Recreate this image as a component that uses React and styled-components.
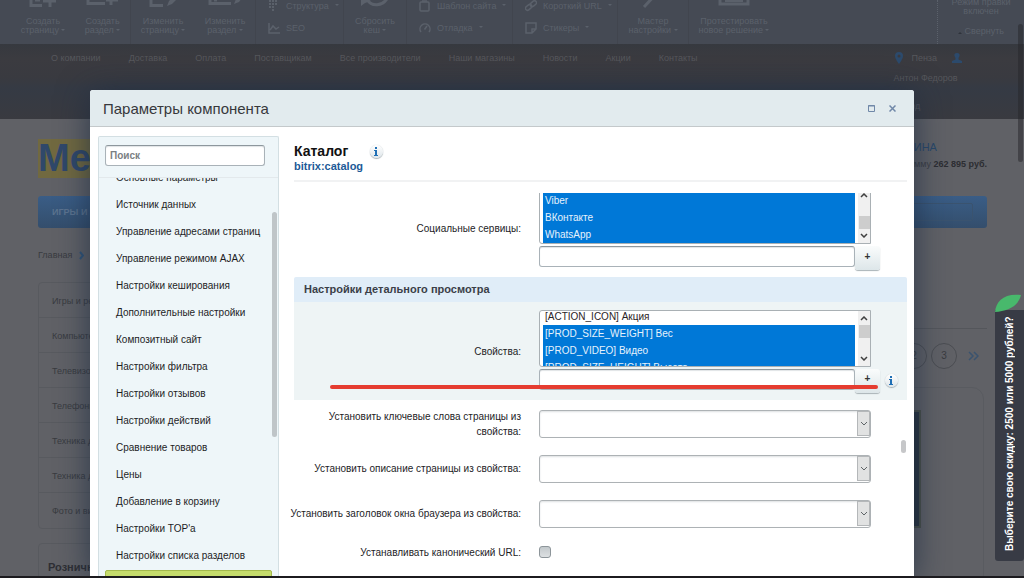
import React, { useEffect, useRef } from 'react'

import styled, { createGlobalStyle } from 'styled-components'


const SECTIONS = [
  'Основные параметры',
  'Источник данных',
  'Управление адресами страниц',
  'Управление режимом AJAX',
  'Настройки кеширования',
  'Дополнительные настройки',
  'Композитный сайт',
  'Настройки фильтра',
  'Настройки отзывов',
  'Настройки действий',
  'Сравнение товаров',
  'Цены',
  'Добавление в корзину',
  "Настройки TOP'а",
  'Настройки списка разделов',
]

const MENU = [
  'О компании',
  'Доставка',
  'Оплата',
  'Поставщикам',
  'Все производители',
  'Наши магазины',
  'Новости',
  'Акции',
  'Контакты',
]

const CATEGORIES = [
  'Игры и ремонт',
  'Компьютер',
  'Телевизор',
  'Телефоны',
  'Техника для',
  'Техника для',
  'Фото и видео',
]

const SERVICES = ['Delicious', 'Facebook', 'Twitter', 'Viber', 'ВКонтакте', 'WhatsApp']

const PROPERTIES = [
  '[ACTION_ICON] Акция',
  '[PROD_SIZE_WEIGHT] Вес',
  '[PROD_VIDEO] Видео',
  '[PROD_SIZE_HEIGHT] Высота',
  '[PROD_SIZE_WIDTH] Ширина',
  '[PROD_COLOR] Цвет',
]

const ToolIcon = ({ children }) => (
  <svg width="34" height="9" viewBox="0 0 34 9" fill="none" stroke="currentColor" strokeWidth="3">{children}</svg>
)

const PageAddIcon = () => (
  <ToolIcon><path d="M5 -4V5.500H16M9 0H14M24 -4V7M17 1H30" /></ToolIcon>
)

const FolderAddIcon = () => (
  <ToolIcon><path d="M2 -4V3.500H19M25 -4V5M20 0H32" /></ToolIcon>
)

const PageEditIcon = () => (
  <ToolIcon>
    <path d="M5 -4V5.500H17" />
    <path d="M21 6L23 1L29 -5L32 -2L26 4Z" fill="currentColor" stroke="none" />
  </ToolIcon>
)

const FolderEditIcon = () => (
  <ToolIcon>
    <path d="M2 -4V3.500H23M6 0H9" />
    <path d="M26 4L28 -1L32 -5L34 -2L31 2Z" fill="currentColor" stroke="none" />
  </ToolIcon>
)

const ResetIcon = () => (
  <ToolIcon>
    <path d="M9 -1C13 7 25 7 30 -3" />
    <path d="M3 -4V6L7 3L13 1Z" fill="currentColor" stroke="none" />
  </ToolIcon>
)

const WandIcon = () => (
  <ToolIcon><path d="M8 7L20 -6" /></ToolIcon>
)

const ScreenIcon = () => (
  <ToolIcon><path d="M3 -6V4H31V-6M8 0.500H26" /></ToolIcon>
)

const SmallIcon = ({ children }) => (
  <svg width="12" height="12" viewBox="0 0 12 12" fill="none" stroke="currentColor" strokeWidth="1.5">{children}</svg>
)

const Info = () => (
  <InfoButton type="button" aria-label="Справка">
    <svg width="5" height="9" viewBox="0 0 5 9" fill="#1f6fb5">
      <rect x="1" y="0" width="2" height="2" />
      <path d="M0 3H3V8H4V9H0V8H1V4H0Z" />
    </svg>
  </InfoButton>
)

const MultiList = ({ id, items, plain, scroll }) => {
  const ref = useRef(null)

  useEffect(() => {
    ref.current.scrollTop = scroll
  }, [scroll])

  return (
    <ListWrap>
      <ListBox id={id} ref={ref} multiple size={3} defaultValue={items.filter((item) => item !== plain)}>
        {items.map((item) => <option key={item} value={item}>{item}</option>)}
      </ListBox>
      <ListBar $end={!plain}>
        <svg width="8" height="5" viewBox="0 0 8 5" fill="none" stroke="#404040" strokeWidth="1.500"><path d="M1 4L4 1L7 4" /></svg>
        <ListThumb />
        <svg width="8" height="5" viewBox="0 0 8 5" fill="none" stroke="#404040" strokeWidth="1.500"><path d="M1 1L4 4L7 1" /></svg>
      </ListBar>
    </ListWrap>
  )
}

const AddValue = ({ label, hint }) => (
  <AddRow>
    <TextBox type="text" aria-label={label} />
    <AddButton type="button">+</AddButton>
    {hint && <Info />}
  </AddRow>
)

const DropDown = ({ id }) => (
  <DropWrap>
    <DropSelect id={id}><option value="" /></DropSelect>
    <DropArrow>
      <svg width="8" height="5" viewBox="0 0 8 5" fill="none" stroke="#5f6568"><path d="M1 1L4 4L7 1" /></svg>
    </DropArrow>
  </DropWrap>
)

const AdminPanel = () => (
  <Toolbar>
    <ToolGroup $width={120}>
      <Tool><PageAddIcon />Создать<br />страницу <Caret /></Tool>
      <Tool><FolderAddIcon />Создать<br />раздел <Caret /></Tool>
    </ToolGroup>
    <ToolGroup $width={125}>
      <Tool><PageEditIcon />Изменить<br />страницу <Caret /></Tool>
      <Tool><FolderEditIcon />Изменить<br />раздел <Caret /></Tool>
    </ToolGroup>
    <ToolStack $width={88}>
      <SmallTool>
        <SmallIcon><path d="M1 1H10M1 4H10M1 7H7M4 10H7" strokeWidth="2" strokeDasharray="2 1" /></SmallIcon>
        Структура <Caret />
      </SmallTool>
      <SmallTool><SmallIcon><path d="M1 1V11H12M2 8L5 4L8 7L11 5" /></SmallIcon>SEO</SmallTool>
    </ToolStack>
    <ToolGroup $width={63}>
      <Tool><ResetIcon />Сбросить<br />кеш <Caret /></Tool>
    </ToolGroup>
    <ToolStack $width={106}>
      <SmallTool><SmallIcon><rect x="1" y="2" width="9" height="9" rx="1" /><path d="M3 1H8" /></SmallIcon>Шаблон сайта <Caret /></SmallTool>
      <SmallTool><SmallIcon><path d="M2 10A5 5 0 1 1 10 10M5.500 7.500L8 4" /></SmallIcon>Отладка <Caret /></SmallTool>
    </ToolStack>
    <ToolStack $width={105}>
      <SmallTool>
        <SmallIcon><rect x="0" y="5" width="7" height="4" rx="2" transform="rotate(-40 4 7)" /><rect x="5" y="2" width="7" height="4" rx="2" transform="rotate(-40 8 4)" /></SmallIcon>
        Короткий URL <Caret />
      </SmallTool>
      <SmallTool><SmallIcon><path d="M1 1H11V7L7 11H1ZM11 7H7V11" /></SmallIcon>Стикеры <Caret /></SmallTool>
    </ToolStack>
    <ToolGroup $width={71}>
      <Tool><WandIcon />Мастер<br />настройки <Caret /></Tool>
    </ToolGroup>
    <ToolGroup $width={90} $last>
      <Tool><ScreenIcon />Протестировать<br />новое решение <Caret /></Tool>
    </ToolGroup>
    <ModeBox>
      <span>Режим правки<br />включен</span>
      <span><Caret $up /> Свернуть</span>
    </ModeBox>
  </Toolbar>
)

const Shop = () => (
  <>
    <SiteHeader>
      <Menu>
        {MENU.map((item) => <a key={item} href="#menu">{item}</a>)}
      </Menu>
      <UserBox>
        <City>
          <svg width="8" height="12" viewBox="0 0 8 12" fill="#2c4a6c"><path fillRule="evenodd" d="M4 0A4 4 0 0 1 8 4C8 7 4 12 4 12S0 7 0 4A4 4 0 0 1 4 0ZM4 2.500A1.500 1.500 0 1 0 4 5.500A1.500 1.500 0 1 0 4 2.500Z" /></svg>
          <span>Пенза</span>
          <svg width="10" height="10" viewBox="0 0 10 10" fill="#2c4a6c"><path d="M5 0C7 0 8 1 7.500 3L6.500 5V6.500L10 8V10H0V8L3.500 6.500V5L2.500 3C2 1 3 0 5 0Z" /></svg>
        </City>
        <span>Антон Федоров</span>
        <Exit href="#exit">Выход</Exit>
      </UserBox>
    </SiteHeader>
    <SiteBody>
      <SiteTop>
        <Logo>Med</Logo>
        <Cart>
          <CartTitle>КОРЗИНА</CartTitle>
          <span>5 на сумму <b>262 895 руб.</b></span>
        </Cart>
      </SiteTop>
      <BlueBar><span>ИГРЫ И ПО</span><BarSearch /></BlueBar>
      <Crumbs>
        Главная
        <svg width="5" height="9" viewBox="0 0 5 9" fill="none" stroke="#2f5478" strokeWidth="2"><path d="M1 1L4 4.500L1 8" /></svg>
      </Crumbs>
      <Columns>
        <div>
          <Categories>
            {CATEGORIES.map((item, i) => <li key={i}>{item}</li>)}
          </Categories>
          <Retail>Розничные</Retail>
        </div>
        <Products>
          <Pager>
            <PageLink href="#2">2</PageLink>
            <PageLink href="#3">3</PageLink>
            <svg width="11" height="10" viewBox="0 0 11 10" fill="none" stroke="#3a536f" strokeWidth="1.500"><path d="M1 1L5 5L1 9M6 1L10 5L6 9" /></svg>
          </Pager>
          <ProductCard><Photo /></ProductCard>
        </Products>
      </Columns>
    </SiteBody>
  </>
)

const App = () => {
  return (
    <Page>
      <GlobalStyle />
      <AdminPanel />
      <Shop />
      <PageThumb />
      <Discount>
        <svg width="26" height="18" viewBox="0 0 26 18" fill="#48b96c"><path d="M0 18C1 7 9 -1 26 1C23 13 12 17 0 18Z" /></svg>
        <DiscountText>Выберите свою скидку: 2500 или 5000 рублей?</DiscountText>
      </Discount>

      <Dialog role="dialog" aria-labelledby="dialog-title">
        <DialogHead>
          <DialogTitle id="dialog-title">Параметры компонента</DialogTitle>
          <HeadButton type="button" aria-label="Развернуть">
            <svg width="7" height="7" viewBox="0 0 7 7" fill="none" stroke="#7088a8"><path d="M.5 .5H6.500V6.500H.5ZM0 1H7" /></svg>
          </HeadButton>
          <HeadButton type="button" aria-label="Закрыть">
            <svg width="7" height="7" viewBox="0 0 7 7" stroke="#7088a8" strokeWidth="1.500"><path d="M.5 .5L6.500 6.500M6.500 .5L.5 6.500" /></svg>
          </HeadButton>
        </DialogHead>
        <DialogBody>
          <Sidebar>
            <SearchBox><TextBox type="search" placeholder="Поиск" aria-label="Поиск" /></SearchBox>
            <SectionScroll>
              <SectionList>
                {SECTIONS.map((item) => <li key={item}><a href="#section">{item}</a></li>)}
                <ActiveSection />
              </SectionList>
              <SideThumb />
            </SectionScroll>
          </Sidebar>
          <Main>
            <MainHead>
              <MainTitle><h2>Каталог</h2><Info /></MainTitle>
              <Code>bitrix:catalog</Code>
            </MainHead>
            <Params>
              <Row $first>
                <Label htmlFor="services">Социальные сервицы:</Label>
                <Field>
                  <MultiList id="services" items={SERVICES} scroll={100} />
                  <AddValue label="Другой сервис" />
                </Field>
              </Row>
              <GroupTitle>Настройки детального просмотра</GroupTitle>
              <Row $active>
                <Label htmlFor="props">Свойства:</Label>
                <Field>
                  <MultiList id="props" items={PROPERTIES} plain="[ACTION_ICON] Акция" scroll={3} />
                  <AddValue label="Другое свойство" hint />
                </Field>
                <RedLine />
              </Row>
              <Row>
                <Label htmlFor="keywords">Установить ключевые слова страницы из свойства:</Label>
                <Field><DropDown id="keywords" /></Field>
              </Row>
              <Row>
                <Label htmlFor="description">Установить описание страницы из свойства:</Label>
                <Field><DropDown id="description" /></Field>
              </Row>
              <Row>
                <Label htmlFor="browser-title">Установить заголовок окна браузера из свойства:</Label>
                <Field><DropDown id="browser-title" /></Field>
              </Row>
              <Row $short>
                <Label htmlFor="canonical">Устанавливать канонический URL:</Label>
                <Field><Check type="checkbox" id="canonical" /></Field>
              </Row>
            </Params>
            <MainThumb />
          </Main>
        </DialogBody>
      </Dialog>
    </Page>
  )
}

export default App

const GlobalStyle = createGlobalStyle`
  * {
    box-sizing: border-box;
  }
  body {
    margin: 0;
    background: #606166;
    font-family: 'Liberation Sans', Arial, sans-serif;
    font-size: 10px;
    overflow: hidden;
  }
  a {
    color: inherit;
    text-decoration: none;
  }
  button, input, select {
    font: inherit;
    margin: 0;
  }
  h1, h2, h3, ul {
    margin: 0;
    padding: 0;
    list-style: none;
  }
  svg {
    display: block;
    flex: none;
  }
`
const Page = styled.div`
  position: relative;
  height: 100vh;
  overflow: hidden;
  border-bottom: 2px solid #1c1b1f;
`

/* admin toolbar */
const Toolbar = styled.div`
  display: flex;
  height: 44px;
  padding-left: 11px;
  background: #454a54;
  color: #5b616b;
  font-size: 9px;
  line-height: 9px;
`
const ToolGroup = styled.div`
  display: flex;
  justify-content: space-around;
  width: ${(p) => p.$width}px;
  border-right: ${(p) => (p.$last ? 0 : '1px solid #41454e')};
`
const Tool = styled.div`
  text-align: center;
  white-space: nowrap;
  svg {
    margin: 0 auto 8px;
  }
`
const ToolStack = styled.div`
  display: flex;
  flex-direction: column;
  gap: 10px;
  width: ${(p) => p.$width}px;
  padding-left: 12px;
  border-right: 1px solid #41454e;
`
const SmallTool = styled.div`
  display: flex;
  align-items: center;
  gap: 6px;
  height: 12px;
  white-space: nowrap;
`
const Caret = styled.i`
  display: inline-block;
  vertical-align: middle;
  border: 2px solid transparent;
  border-top-color: ${(p) => (p.$up ? 'transparent' : '#5b616b')};
  border-bottom-color: ${(p) => (p.$up ? '#2f333b' : 'transparent')};
`
const ModeBox = styled.div`
  display: flex;
  flex-direction: column;
  justify-content: space-between;
  width: 87px;
  margin-left: auto;
  padding-bottom: 8px;
  border-left: 1px dotted #5b616b;
  text-align: center;
  span:first-child {
    margin-top: -2px;
  }
`

/* shop */
const SiteHeader = styled.header`
  display: flex;
  justify-content: space-between;
  height: 75px;
  padding: 8px 62px 0 51px;
  background: linear-gradient(#36393f, #3b3b40 20%, #393a40 45%, #353a44 60%, #393a40);
  color: #56575c;
`
const Menu = styled.nav`
  display: flex;
  gap: 28px;
  line-height: 12px;
  font-size: 9px;
  white-space: nowrap;
`
const UserBox = styled.div`
  display: flex;
  flex-direction: column;
  gap: 8px;
  line-height: 12px;
  font-size: 9px;
`
const City = styled.div`
  display: flex;
  align-items: center;
  padding-left: 2px;
  span {
    margin: 0 15px 0 8px;
  }
`
const Exit = styled.a`
  margin-top: 8px;
`
const SiteBody = styled.main`
  padding: 20px 37px 0 38px;
  color: #393b40;
`
const SiteTop = styled.div`
  display: flex;
  justify-content: space-between;
  height: 57px;
`
const Logo = styled.div`
  height: 39px;
  background: #716940;
  color: #30486a;
  font-size: 38px;
  line-height: 39px;
  font-weight: bold;
`
const Cart = styled.div`
  display: flex;
  flex-direction: column;
  gap: 4px;
  padding-top: 2px;
  line-height: 13px;
  font-size: 9px;
  color: #3c3e43;
  b {
    color: #2c2d32;
  }
`
const CartTitle = styled.span`
  color: #29486a;
  font-size: 11px;
`
const BlueBar = styled.div`
  display: flex;
  align-items: center;
  justify-content: space-between;
  height: 32px;
  padding: 0 14px;
  border-radius: 3px;
  background: linear-gradient(#3a5d86, #344e6c);
  color: #5b738f;
  font-size: 9px;
  font-weight: bold;
`
const BarSearch = styled.div`
  width: 180px;
  height: 18px;
  border: 1px solid #3a536f;
  border-radius: 2px;
`
const Crumbs = styled.div`
  display: flex;
  align-items: center;
  gap: 7px;
  height: 54px;
  font-size: 9px;
`
const Columns = styled.div`
  display: grid;
  grid-template-columns: 200px 1fr;
  gap: 20px;
`
const Categories = styled.ul`
  border: 1px solid #585a5f;
  border-radius: 4px;
  font-size: 9px;
  li {
    height: 35px;
    padding-left: 13px;
    border-bottom: 1px solid #585a5f;
    line-height: 36px;
  }
  li:last-child {
    border: 0;
  }
`
const Retail = styled.h3`
  height: 60px;
  margin-top: 14px;
  padding: 16px 9px;
  border: 1px solid #585a5f;
  border-radius: 4px;
  font-size: 11px;
  line-height: 14px;
  color: #2e2f34;
`
const Products = styled.div`
  margin-top: 46px;
  border-top: 1px solid #54565b;
`
const Pager = styled.div`
  display: flex;
  align-items: center;
  justify-content: flex-end;
  gap: 4px;
  height: 58px;
  padding: 0 8px 4px;
  svg {
    margin-left: 7px;
  }
`
const PageLink = styled.a`
  width: 26px;
  height: 26px;
  border: 1px solid #4b4d52;
  border-radius: 50%;
  line-height: 24px;
  text-align: center;
`
const ProductCard = styled.div`
  height: 200px;
  margin-right: 3px;
  padding: 22px 62px;
  border: 1px solid #595b60;
  border-radius: 12px;
`
const Photo = styled.div`
  height: 118px;
  border: 2px solid #4a5048;
  background: #29333e;
`
const PageThumb = styled.div`
  position: absolute;
  top: 24px;
  right: 1px;
  width: 5px;
  height: 138px;
  border-radius: 3px;
  background: rgba(38, 38, 42, 0.5);
`
const Discount = styled.aside`
  position: absolute;
  top: 294px;
  right: 0;
  width: 29px;
  border-radius: 3px;
  background: linear-gradient(transparent 6%, #383b45 6%);
`
const DiscountText = styled.p`
  height: 249px;
  margin: 0;
  padding-top: 10px;
  color: #fff;
  font-weight: bold;
  line-height: 29px;
  writing-mode: vertical-rl;
  transform: rotate(180deg);
  white-space: nowrap;
`

/* dialog */
const Dialog = styled.section`
  position: absolute;
  top: 90px;
  left: 90px;
  right: 110px;
  bottom: 0;
  display: flex;
  flex-direction: column;
  border-radius: 3px 3px 0 0;
  background: #fff;
  box-shadow: 0 4px 32px rgba(26, 42, 64, 0.75);
  color: #1d1d1f;
`
const DialogHead = styled.header`
  display: flex;
  align-items: center;
  gap: 14px;
  height: 37px;
  padding: 0 18px 0 13px;
  border-bottom: 1px solid #c4c9cb;
  border-radius: 3px 3px 0 0;
  background: #e2ebee;
`
const DialogTitle = styled.h1`
  flex: 1;
  font-size: 15px;
  font-weight: normal;
  color: #37383c;
`
const HeadButton = styled.button`
  padding: 0;
  border: 0;
  background: none;
`
const DialogBody = styled.div`
  flex: 1;
  display: flex;
  gap: 15px;
  min-height: 0;
  padding: 9px 7px 0 8px;
`
const Sidebar = styled.div`
  display: flex;
  flex-direction: column;
  width: 181px;
  border: 1px solid #d3dfe3;
  border-bottom: 0;
  border-radius: 2px 2px 0 0;
  background: #eef6f9;
`
const SearchBox = styled.div`
  height: 41px;
  padding: 8px 13px 0 6px;
  border-bottom: 1px solid #e3e9ec;
`
const TextBox = styled.input`
  display: block;
  width: 100%;
  min-width: 0;
  height: 21px;
  padding: 0 4px;
  border: 1px solid #a9b2b8;
  border-top-color: #8d979d;
  border-radius: 3px;
  background: #fff;
  box-shadow: inset 0 1px 1px #e0e4e6;
  outline: 0;
  &::placeholder {
    color: #7b8083;
    font-weight: bold;
  }
`
const SectionScroll = styled.div`
  flex: 1;
  display: flex;
  justify-content: space-between;
  min-height: 0;
  padding: 0 1px 0 6px;
  overflow: hidden;
`
const SectionList = styled.ul`
  width: 167px;
  margin-top: -14px;
  li {
    height: 27px;
    padding-left: 11px;
    line-height: 27px;
    white-space: nowrap;
  }
`
const ActiveSection = styled.li`
  margin-top: 1px;
  border: 1px solid #a3b94d;
  border-radius: 2px;
  background: #c5dc6c;
`
const SideThumb = styled.div`
  width: 5px;
  height: 225px;
  margin-top: 34px;
  border-radius: 3px;
  background: #bfc5c8;
`
const Main = styled.div`
  position: relative;
  flex: 1;
  display: flex;
  flex-direction: column;
  min-width: 0;
`
const MainHead = styled.div`
  height: 46px;
  padding-top: 7px;
  border-bottom: 2px solid #f1f2f3;
`
const MainTitle = styled.div`
  display: flex;
  align-items: center;
  gap: 22px;
  height: 16px;
  h2 {
    font-size: 14px;
    color: #111;
  }
`
const Code = styled.div`
  font-size: 11px;
  line-height: 14px;
  font-weight: bold;
  color: #1c5a97;
`
const InfoButton = styled.button`
  display: flex;
  align-items: center;
  justify-content: center;
  flex: none;
  width: 13px;
  height: 13px;
  padding: 0;
  border: 0;
  border-radius: 50%;
  background: linear-gradient(#fff, #dfe6ea);
  box-shadow: 0 1px 1px #a8b2b8, 0 0 1px #b8c0c5;
`
const Params = styled.div`
  flex: 1;
  min-height: 0;
  margin: 11px 0 0 -8px;
  padding-left: 8px;
  overflow: hidden;
`
const Row = styled.div`
  position: relative;
  display: grid;
  grid-template-columns: 227px 1fr;
  align-items: center;
  column-gap: 18px;
  height: ${(p) => (p.$active ? 98 : p.$first ? 97 : p.$short ? 32 : 45)}px;
  margin-top: ${(p) => (p.$first ? -13 : 0)}px;
  padding-top: ${(p) => (p.$active || p.$first ? 0 : 2)}px;
  background: ${(p) => (p.$active ? '#eef4f5' : 'none')};
`
const Label = styled.label`
  margin-left: -8px;
  line-height: 15px;
  text-align: right;
`
const Field = styled.div`
  min-width: 0;
`
const GroupTitle = styled.h3`
  height: 25px;
  padding-left: 10px;
  border-radius: 2px 2px 0 0;
  background: #e0edf8;
  font-size: 11px;
  line-height: 25px;
  color: #3b3f48;
`
const ListWrap = styled.div`
  display: flex;
  justify-content: space-between;
  width: 332px;
  height: 57px;
  padding-left: 3px;
  border: 1px solid #a9b0b4;
  border-radius: 3px 0 0 3px;
  background: #fff;
`
const ListBox = styled.select`
  display: block;
  width: 312px;
  height: 55px;
  padding: 0;
  border: 0;
  border-radius: 0;
  background: #fff;
  color: #2b2326;
  outline: 0;
  scrollbar-width: none;
  option {
    height: 17px;
    min-height: 17px;
    padding: 3px 2px 0;
  }
  option:checked {
    background: linear-gradient(#0078d7, #0078d7);
    -webkit-text-fill-color: #e6f2fc;
  }
`
const ListBar = styled.div`
  display: flex;
  flex-direction: column;
  align-items: center;
  justify-content: space-between;
  width: 12px;
  padding: 5px 0;
  background: #f0f0f0;
  & > div {
    margin: ${(p) => (p.$end ? '14px 0 0' : '0 0 14px')};
  }
`
const ListThumb = styled.div`
  width: 11px;
  height: 13px;
  background: #cdcdcd;
`
const AddRow = styled.div`
  display: flex;
  align-items: center;
  height: 24px;
  margin-top: 2px;
  ${TextBox} {
    width: 316px;
    margin-bottom: 3px;
  }
  ${InfoButton} {
    margin-left: 5px;
  }
`
const AddButton = styled.button`
  width: 25px;
  height: 24px;
  padding: 0 0 4px;
  border: 0;
  border-radius: 3px;
  background: linear-gradient(#fafcfc, #dde6e9);
  box-shadow: 0 1px 1px #a9b3b7;
  color: #333;
  font-weight: bold;
`
const DropWrap = styled.div`
  position: relative;
  width: 332px;
`
const DropSelect = styled.select`
  display: block;
  width: 100%;
  height: 28px;
  border: 1px solid #adb2b5;
  border-radius: 3px;
  background: #fff;
  box-shadow: inset 0 1px 2px #dde0e2;
  appearance: none;
  outline: 0;
`
const DropArrow = styled.span`
  position: absolute;
  top: 1px;
  right: 1px;
  display: flex;
  align-items: center;
  justify-content: center;
  width: 13px;
  height: 25px;
  border: 1px solid #b4b7b9;
  background: #e1e2e2;
  pointer-events: none;
`
const Check = styled.input`
  display: block;
  width: 12px;
  height: 12px;
  border: 1px solid #8d959a;
  border-radius: 3px;
  background: linear-gradient(#c3c9cc, #dde0e2);
  appearance: none;
`
const RedLine = styled.div`
  position: absolute;
  left: 36px;
  right: 29px;
  bottom: 11px;
  height: 4px;
  border-radius: 2px;
  background: #e53c30;
  pointer-events: none;
`
const MainThumb = styled.div`
  position: absolute;
  top: 304px;
  right: 1px;
  width: 5px;
  height: 13px;
  border-radius: 3px;
  background: #c6c7c9;
`
